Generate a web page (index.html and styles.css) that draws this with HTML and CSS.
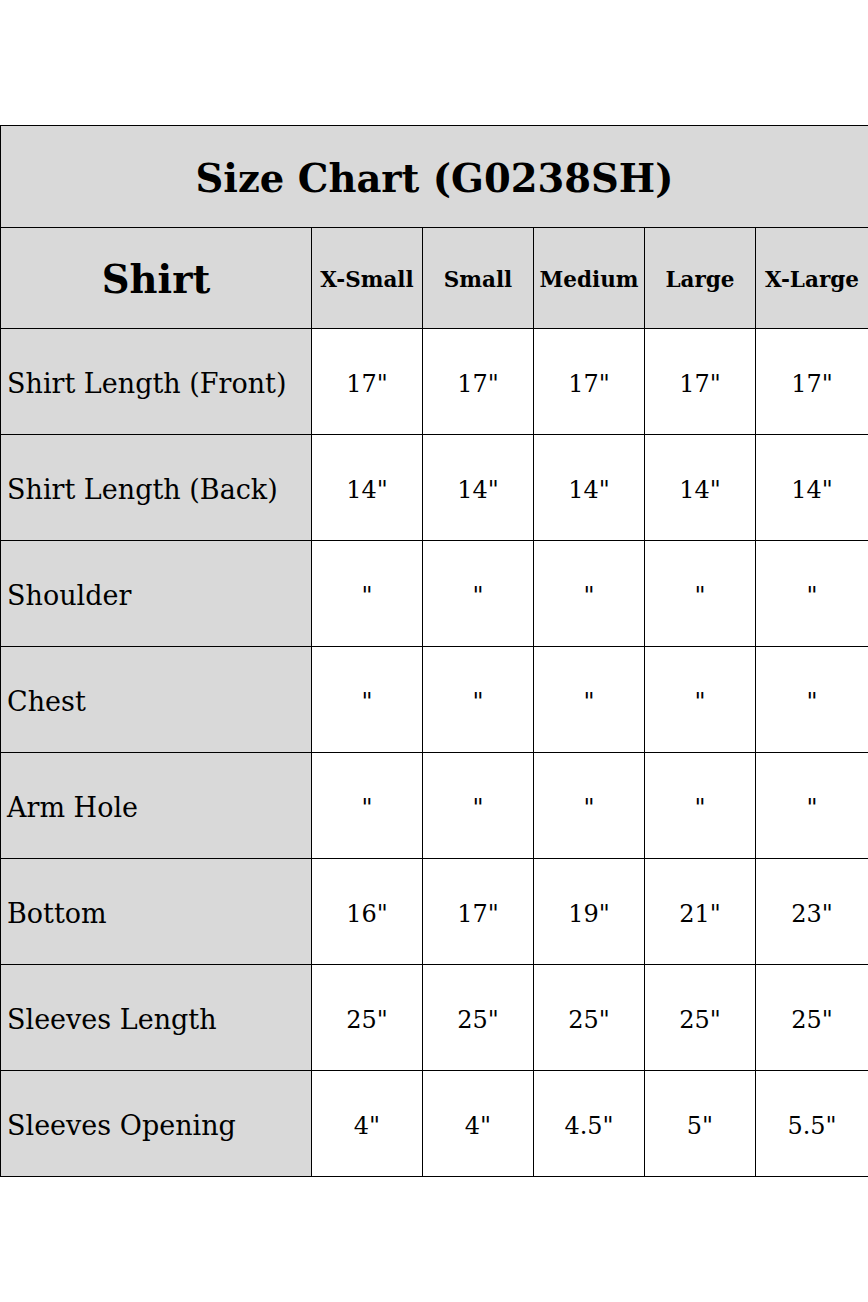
FILE: index.html
```html
<!DOCTYPE html>
<html lang="en">
<head>
<meta charset="utf-8">
<title>Size Chart (G0238SH)</title>
<link rel="stylesheet" href="styles.css">
</head>
<body>
<table class="chart">
  <colgroup>
    <col class="col-label">
    <col class="col-size">
    <col class="col-size">
    <col class="col-size">
    <col class="col-size">
    <col class="col-size-last">
  </colgroup>
  <tr class="row-title">
    <th colspan="6" class="title">Size Chart (G0238SH)</th>
  </tr>
  <tr class="row-head">
    <th class="group">Shirt</th>
    <th class="size">X-Small</th>
    <th class="size">Small</th>
    <th class="size">Medium</th>
    <th class="size">Large</th>
    <th class="size">X-Large</th>
  </tr>
  <tr class="row-data">
    <td class="label">Shirt Length (Front)</td>
    <td class="val">17"</td><td class="val">17"</td><td class="val">17"</td><td class="val">17"</td><td class="val">17"</td>
  </tr>
  <tr class="row-data">
    <td class="label">Shirt Length (Back)</td>
    <td class="val">14"</td><td class="val">14"</td><td class="val">14"</td><td class="val">14"</td><td class="val">14"</td>
  </tr>
  <tr class="row-data">
    <td class="label">Shoulder</td>
    <td class="val">"</td><td class="val">"</td><td class="val">"</td><td class="val">"</td><td class="val">"</td>
  </tr>
  <tr class="row-data">
    <td class="label">Chest</td>
    <td class="val">"</td><td class="val">"</td><td class="val">"</td><td class="val">"</td><td class="val">"</td>
  </tr>
  <tr class="row-data">
    <td class="label">Arm Hole</td>
    <td class="val">"</td><td class="val">"</td><td class="val">"</td><td class="val">"</td><td class="val">"</td>
  </tr>
  <tr class="row-data">
    <td class="label">Bottom</td>
    <td class="val">16"</td><td class="val">17"</td><td class="val">19"</td><td class="val">21"</td><td class="val">23"</td>
  </tr>
  <tr class="row-data">
    <td class="label">Sleeves Length</td>
    <td class="val">25"</td><td class="val">25"</td><td class="val">25"</td><td class="val">25"</td><td class="val">25"</td>
  </tr>
  <tr class="row-data">
    <td class="label">Sleeves Opening</td>
    <td class="val">4"</td><td class="val">4"</td><td class="val">4.5"</td><td class="val">5"</td><td class="val">5.5"</td>
  </tr>
</table>
</body>
</html>
```
FILE: styles.css
```css
html, body {
  margin: 0;
  padding: 0;
  background: #ffffff;
}

body {
  font-family: "DejaVu Serif", "Liberation Serif", serif;
  color: #000000;
}

.chart {
  margin-top: 125px;
  width: 868px;
  border-collapse: collapse;
  table-layout: fixed;
}

.col-label { width: 311px; }
.col-size { width: 111px; }
.col-size-last { width: 113px; }

.chart th,
.chart td {
  border: 1px solid #000000;
  padding: 0;
  vertical-align: middle;
}

.row-title { height: 102px; }
.row-head { height: 101px; }
.row-data { height: 106px; }

.chart .title {
  background: #d9d9d9;
  font-size: 38.5px;
  font-weight: 700;
  text-align: center;
  padding-top: 4px;
}

.chart .group {
  background: #d9d9d9;
  font-size: 38.5px;
  font-weight: 700;
  text-align: center;
  padding-top: 2px;
}

.chart .size {
  background: #d9d9d9;
  font-size: 21.5px;
  font-weight: 700;
  text-align: center;
  white-space: nowrap;
  padding-top: 2px;
}

.chart .label {
  background: #d9d9d9;
  font-size: 27px;
  text-align: left;
  padding-left: 6px;
  padding-top: 4px;
}

.chart .val {
  background: #ffffff;
  font-size: 24px;
  text-align: center;
  padding-top: 4px;
}
```
